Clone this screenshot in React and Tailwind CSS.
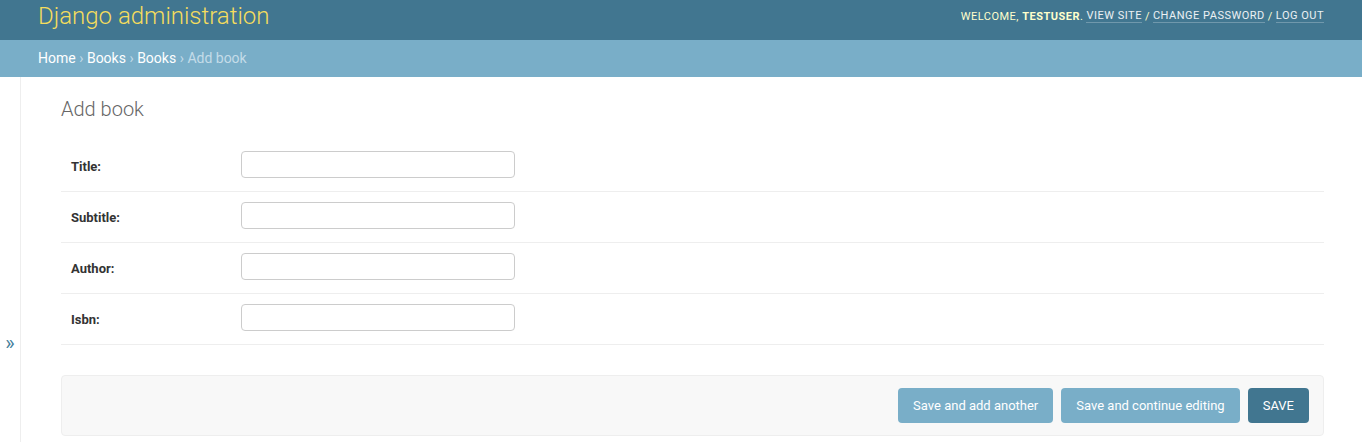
import React from 'react';

const rows = ['Title', 'Subtitle', 'Author', 'Isbn'];

function Header() {
  return (
    <div className="h-10 bg-[#417690] px-[38px] pb-[8px] flex items-center justify-between">
      <div className="text-[24px] font-light text-[#f5dd5d] leading-none">Django administration</div>
      <div className="text-[11px] uppercase tracking-[0.5px] text-[#ffc] leading-none flex items-center gap-[3px]">
        <span>
          Welcome, <strong className="font-bold">testuser</strong>.
        </span>
        <a className="text-white/90 border-b border-white/25 pb-[1px]">View site</a>
        <span>/</span>
        <a className="text-white/90 border-b border-white/25 pb-[1px]">Change password</a>
        <span>/</span>
        <a className="text-white/90 border-b border-white/25 pb-[1px]">Log out</a>
      </div>
    </div>
  );
}

function Breadcrumbs() {
  return (
    <div className="h-[37px] bg-[#79aec8] px-[38px] flex items-center text-[14px] text-[#c4dce8]">
      <a className="text-white">Home</a>
      <span className="mx-[3.5px]">›</span>
      <a className="text-white">Books</a>
      <span className="mx-[3.5px]">›</span>
      <a className="text-white">Books</a>
      <span className="mx-[3.5px]">›</span>
      <span>Add book</span>
    </div>
  );
}

export default function App() {
  return (
    <div className="bg-white text-[#333]" style={{ fontFamily: 'Roboto, "Liberation Sans", sans-serif' }}>
      <Header />
      <Breadcrumbs />
      <div className="flex h-[534px]">
        <button className="w-[21px] shrink-0 border-r border-[#eee] flex items-center justify-center text-[#447e9b] text-[20px] leading-none pb-[2px]">
          »
        </button>
        <div className="flex-1 pl-[40px] pr-[38px] pt-[20px]">
          <h1 className="text-[20px] font-light text-[#666] leading-6 mb-[20px]">Add book</h1>
          <div>
            {rows.map((r) => (
              <div key={r} className="h-[50px] box-content border-b border-[#eee] px-[10px] flex items-start">
                <label className="w-[170px] shrink-0 pt-[18px] text-[13px] font-bold leading-4 text-[#333]">{r}:</label>
                <input
                  type="text"
                  className="mt-[10px] w-[274px] h-[27px] border border-[#ccc] rounded-[4px] px-[6px] text-[13px] outline-none"
                />
              </div>
            ))}
          </div>
          <div className="mt-[30px] bg-[#f8f8f8] border border-[#eee] rounded-[4px] px-[14px] py-[12px] flex justify-end gap-2">
            <button className="h-[35px] px-[15px] rounded-[4px] bg-[#79aec8] text-white text-[13px]">Save and add another</button>
            <button className="h-[35px] px-[15px] rounded-[4px] bg-[#79aec8] text-white text-[13px]">Save and continue editing</button>
            <button className="h-[35px] px-[15px] rounded-[4px] bg-[#417690] text-white text-[13px] uppercase">Save</button>
          </div>
        </div>
      </div>
    </div>
  );
}
